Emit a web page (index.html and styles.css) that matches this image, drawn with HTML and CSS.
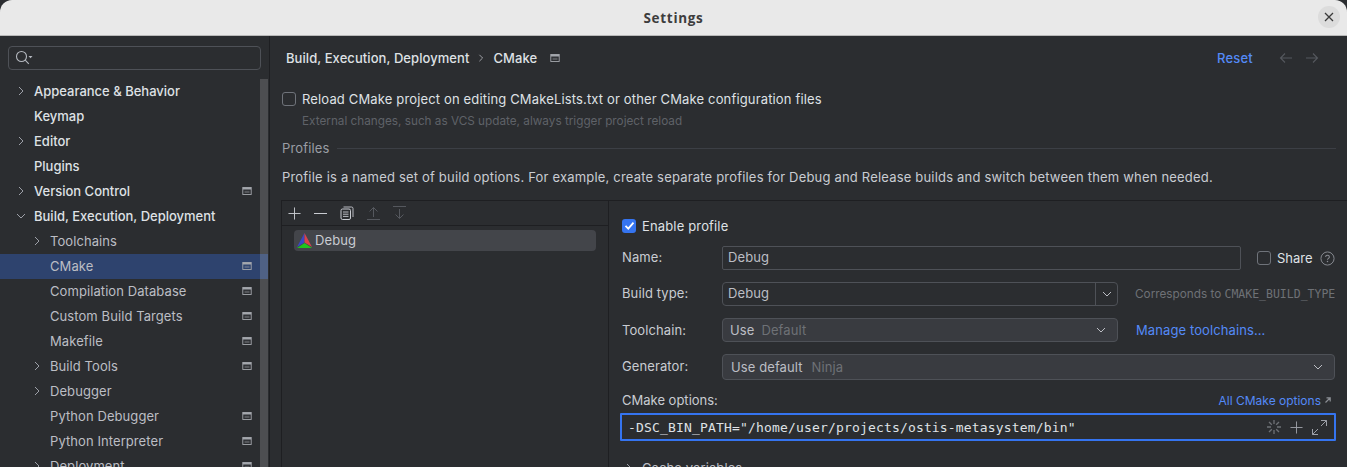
FILE: index.html
```html
<!DOCTYPE html>
<html lang="en">
<head>
  <meta charset="UTF-8" />
  <title>Settings</title>
  <link rel="stylesheet" href="styles.css">
</head>
<body>
  <svg class="defs" width="0" height="0">
    <symbol id="page" viewBox="0 0 10 10"><rect x=".8" y="1.500" width="8.400" height="7" fill="none" stroke="currentColor" stroke-width=".9"/><rect x=".8" y="1.500" width="8.400" height="2" fill="currentColor"/><rect x="2.500" y="4.800" width="5" height="2.200" fill="currentColor" opacity=".35"/></symbol>
    <symbol id="right" viewBox="0 0 10 10"><path d="M3 1l4 4-4 4" fill="none" stroke="currentColor"/></symbol>
    <symbol id="down" viewBox="0 0 10 10"><path d="M1 3l4 4 4-4" fill="none" stroke="currentColor"/></symbol>
    <symbol id="plus" viewBox="0 0 14 14"><path d="M7 .5v13M.5 7h13" fill="none" stroke="currentColor"/></symbol>
  </svg>

  <header class="titlebar">
    <span class="title">Settings</span>
    <button class="close"><svg width="10" height="10" viewBox="0 0 10 10"><path d="M1 1l8 8M9 1l-8 8" stroke="#3a3a3a" stroke-width="1.300"/></svg></button>
  </header>

  <div class="window">
    <aside class="sidebar">
      <div class="search">
        <svg width="18" height="16" viewBox="0 0 18 16"><circle cx="6.500" cy="6.500" r="5" fill="none" stroke="#b4b8bf" stroke-width="1.100"/><path d="M10.200 10.200l3.600 3.600" stroke="#b4b8bf" stroke-width="1.100"/><path d="M13.500 6h4l-2 2.200z" fill="#b4b8bf"/></svg>
      </div>
      <div class="tree-wrap">
        <ul class="tree">
          <li class="row top"><svg class="arrow"><use href="#right"/></svg>Appearance &amp; Behavior</li>
          <li class="row top"><span class="arrow"></span>Keymap</li>
          <li class="row top"><svg class="arrow"><use href="#right"/></svg>Editor</li>
          <li class="row top"><span class="arrow"></span>Plugins</li>
          <li class="row top"><svg class="arrow"><use href="#right"/></svg>Version Control<svg class="mark"><use href="#page"/></svg></li>
          <li class="row top"><svg class="arrow"><use href="#down"/></svg>Build, Execution, Deployment</li>
          <li class="row sub"><svg class="arrow"><use href="#right"/></svg>Toolchains</li>
          <li class="row sub selected"><span class="arrow"></span>CMake<svg class="mark"><use href="#page"/></svg></li>
          <li class="row sub"><span class="arrow"></span>Compilation Database<svg class="mark"><use href="#page"/></svg></li>
          <li class="row sub"><span class="arrow"></span>Custom Build Targets<svg class="mark"><use href="#page"/></svg></li>
          <li class="row sub"><span class="arrow"></span>Makefile<svg class="mark"><use href="#page"/></svg></li>
          <li class="row sub"><svg class="arrow"><use href="#right"/></svg>Build Tools<svg class="mark"><use href="#page"/></svg></li>
          <li class="row sub"><svg class="arrow"><use href="#right"/></svg>Debugger</li>
          <li class="row sub"><span class="arrow"></span>Python Debugger<svg class="mark"><use href="#page"/></svg></li>
          <li class="row sub"><span class="arrow"></span>Python Interpreter<svg class="mark"><use href="#page"/></svg></li>
          <li class="row sub"><svg class="arrow"><use href="#right"/></svg>Deployment<svg class="mark"><use href="#page"/></svg></li>
        </ul>
        <div class="scrollbar"></div>
      </div>
    </aside>

    <main class="content">
      <div class="crumbs">
        <span class="crumb">Build, Execution, Deployment</span>
        <svg class="crumb-sep"><use href="#right"/></svg>
        <span class="crumb">CMake</span>
        <svg class="crumb-mark"><use href="#page"/></svg>
        <a class="reset">Reset</a>
        <svg class="nav" width="14" height="12" viewBox="0 0 14 12"><path d="M13 6H1.500M6 1.500L1.500 6 6 10.500" fill="none" stroke="#55585e" stroke-width="1.100"/></svg>
        <svg class="nav" width="14" height="12" viewBox="0 0 14 12"><path d="M1 6h11.500M8 1.500L12.500 6 8 10.500" fill="none" stroke="#55585e" stroke-width="1.100"/></svg>
      </div>

      <label class="check reload"><span class="box"></span>Reload CMake project on editing CMakeLists.txt or other CMake configuration files</label>
      <p class="hint">External changes, such as VCS update, always trigger project reload</p>

      <div class="section"><span>Profiles</span><i></i></div>
      <p class="desc">Profile is a named set of build options. For example, create separate profiles for Debug and Release builds and switch between them when needed.</p>

      <div class="panel">
        <div class="profiles">
          <div class="toolbar">
            <svg class="tool" width="13" height="13"><use href="#plus"/></svg>
            <svg class="tool" width="13" height="13" viewBox="0 0 13 13"><path d="M0 6.500h13" stroke="currentColor"/></svg>
            <svg class="tool" width="14" height="14" viewBox="0 0 14 14"><rect x="1" y="3" width="9.500" height="10.500" rx="1.500" fill="none" stroke="currentColor"/><path d="M3.500 1h8A1.500 1.500 0 0 1 13 2.500V11M3 6h5.500M3 8.200h5.500M3 10.400h5.500" fill="none" stroke="currentColor" stroke-width=".9"/></svg>
            <svg class="tool off" width="13" height="14" viewBox="0 0 13 14"><path d="M6.500 11V1.500M2.500 5.500l4-4 4 4M0 13.500h13" fill="none" stroke="currentColor"/></svg>
            <svg class="tool off" width="13" height="14" viewBox="0 0 13 14"><path d="M6.500 3v9.500M2.500 8.500l4 4 4-4M0 .5h13" fill="none" stroke="currentColor"/></svg>
          </div>
          <div class="profile">
            <svg width="15" height="15" viewBox="0 0 15 15"><path d="M7.500 0L0 14l7.500-4.500z" fill="#3b46c4"/><path d="M7.500 0L15 14l-7.500-4.500z" fill="#d8424c"/><path d="M0 15h15L7.500 10z" fill="#1fc41f"/></svg>
            Debug
          </div>
        </div>

        <form class="details">
          <label class="check enable"><span class="box on"><svg width="13" height="13" viewBox="0 0 13 13"><path d="M2.500 6.800l2.800 2.800 5.200-6" fill="none" stroke="#fff" stroke-width="1.800"/></svg></span>Enable profile</label>

          <div class="field f-name">
            <label>Name:</label>
            <div class="input name">Debug</div>
            <label class="check share"><span class="box"></span>Share</label>
            <svg class="help" width="15" height="15" viewBox="0 0 16 16"><circle cx="8" cy="8" r="7" fill="none" stroke="#8b8e94"/><path d="M6 6.300C6 5 7 4.500 8 4.500s2 .7 2 1.800c0 1.500-2 1.500-2 3" fill="none" stroke="#8b8e94" stroke-width="1.100"/><circle cx="8" cy="11.300" r=".8" fill="#8b8e94"/></svg>
          </div>

          <div class="field f-type">
            <label>Build type:</label>
            <div class="input combo">Debug<span class="combo-btn"><svg class="chev"><use href="#down"/></svg></span></div>
            <span class="note">Corresponds to <code>CMAKE_BUILD_TYPE</code></span>
          </div>

          <div class="field f-tool">
            <label>Toolchain:</label>
            <div class="select short"><span>Use</span><em>Default</em><svg class="chev"><use href="#down"/></svg></div>
            <a class="link">Manage toolchains...</a>
          </div>

          <div class="field f-gen">
            <label>Generator:</label>
            <div class="select wide"><span>Use default</span><em>Ninja</em><svg class="chev"><use href="#down"/></svg></div>
          </div>

          <div class="options-head">
            <label>CMake options:</label>
            <a class="link small">All CMake options<svg width="6" height="6" viewBox="0 0 6 6"><path d="M.5 5.500L5 1M1.500 .8H5.200V4.500" fill="none" stroke="#8b8e94" stroke-width="1.200"/></svg></a>
          </div>
          <div class="options">
            <code>-DSC_BIN_PATH="/home/user/projects/ostis-metasystem/bin"</code>
            <svg class="spin" width="14" height="14" viewBox="0 0 14 14"><path d="M7 0v4M7 10v4M0 7h4M10 7h4M2 2l2.800 2.800M9.200 9.200L12 12M12 2L9.200 4.800M4.800 9.200L2 12" stroke="#6e7176" stroke-width="1.300"/></svg>
            <svg class="tool-plain" width="13" height="13"><use href="#plus"/></svg>
            <svg class="tool-plain" width="15" height="15" viewBox="0 0 15 15"><path d="M9 .5h5.500V6M14.500 .5L9 6M6 14.500H.5V9M.5 14.500L6 9" fill="none" stroke="currentColor"/></svg>
          </div>
          <div class="cache"><svg class="arrow"><use href="#right"/></svg>Cache variables</div>
        </form>
      </div>
    </main>
  </div>
</body>
</html>
```

FILE: styles.css
```css
* {
  box-sizing: border-box;
}
html, body {
  height: 467px;
  margin: 0;
  overflow: hidden;
}
body {
  font-family: Inter, "Noto Sans", sans-serif;
  font-size: 13px;
  background-color: #2b2d30;
  color: #c9ccd2;
}
.defs {
  display: none;
}
a {
  color: #548af7;
}

.titlebar {
  height: 36px;
  background: #e9e9e9;
  border-bottom: 1px solid #b9b9b9;
  border-radius: 12px 12px 0 0;
  display: flex;
  align-items: center;
  justify-content: center;
  position: relative;
}
.title {
  font-family: "Open Sans", sans-serif;
  font-weight: 700;
  font-size: 13.5px;
  color: #3d3d3d;
  letter-spacing: .7px;
}
.close {
  position: absolute;
  right: 7px;
  top: 6px;
  width: 22px;
  height: 22px;
  padding: 0;
  border: none;
  border-radius: 50%;
  background: #dcdcdc;
  display: flex;
  align-items: center;
  justify-content: center;
}

.window {
  display: flex;
  height: 431px;
}

.sidebar {
  width: 270px;
  flex: none;
  border-right: 1px solid #1e1f22;
  padding-top: 10px;
}
.search {
  height: 24px;
  margin: 0 8px;
  border: 1px solid #4e5157;
  border-radius: 4px;
  display: flex;
  align-items: center;
  padding-left: 6px;
}
.tree-wrap {
  position: relative;
  margin-top: 9px;
}
.tree {
  list-style: none;
  margin: 0;
  padding: 0;
}
.row {
  height: 25px;
  padding-bottom: 2px;
  display: flex;
  align-items: center;
  white-space: nowrap;
}
.row.top {
  padding-left: 16px;
  color: #dfe1e5;
  font-weight: 500;
}
.row.sub {
  padding-left: 32px;
  color: #bcbec4;
  letter-spacing: .08px;
}
.row.selected {
  background: #2e436e;
  margin-right: 1px;
}
.arrow {
  width: 10px;
  height: 10px;
  flex: none;
  margin-right: 8px;
  color: #9da0a8;
}
.mark {
  width: 10px;
  height: 10px;
  margin-left: auto;
  margin-right: 17px;
  color: #a4a7ad;
  flex: none;
}
.row.selected .mark {
  margin-right: 16px;
}
.scrollbar {
  position: absolute;
  top: 0;
  right: 1px;
  bottom: -200px;
  width: 8px;
  background: rgba(255, 255, 255, .16);
}

.content {
  flex: 1;
  min-width: 0;
  padding: 0 11px 0 12px;
}
.crumbs {
  height: 44px;
  display: flex;
  align-items: center;
  padding: 0 0 1px 4px;
}
.crumb {
  color: #dfe1e5;
  font-weight: 500;
  letter-spacing: .07px;
}
.crumb-sep {
  width: 8px;
  height: 8px;
  margin: 0 8px;
  color: #bcbec4;
}
.crumb-mark {
  width: 10px;
  height: 10px;
  margin-left: 13px;
  color: #a4a7ad;
}
.reset {
  margin-left: auto;
  letter-spacing: .2px;
  font-weight: 500;
}
.nav {
  margin-left: 12px;
}
.reset + .nav {
  margin-left: 26px;
}
.nav:last-child {
  margin-right: 17px;
}

.check {
  display: flex;
  align-items: center;
  color: #dfe1e5;
  letter-spacing: .15px;
}
.box {
  width: 14px;
  height: 14px;
  flex: none;
  margin-right: 6px;
  border: 1px solid #6f737a;
  border-radius: 3px;
}
.box.on {
  background: #3574f0;
  border: none;
  display: flex;
  align-items: center;
  justify-content: center;
}
.reload {
  margin-top: 9px;
  height: 20px;
}
.hint {
  margin: 4px 0 0 20px;
  font-size: 11.75px;
  line-height: 16px;
  color: #5f6268;
}
.section {
  display: flex;
  align-items: center;
  margin-top: 10px;
  height: 18px;
  color: #9a9da4;
  letter-spacing: .15px;
}
.section i {
  flex: 1;
  height: 1px;
  margin-left: 7px;
  background: #3c3f45;
}
.desc {
  margin: 11px 0 0;
  line-height: 18px;
  color: #c9ccd2;
  letter-spacing: .19px;
}

.panel {
  display: flex;
  margin-top: 14px;
  height: 300px;
  margin-left: -1px;
  margin-right: -11px;
  border-top: 1px solid #1e1f22;
  border-left: 1px solid #1e1f22;
}
.profiles {
  width: 327px;
  flex: none;
  border-right: 1px solid #1e1f22;
}
.toolbar {
  height: 25px;
  display: flex;
  align-items: center;
  padding-left: 6px;
  gap: 13px;
  border-bottom: 1px solid #1e1f22;
  color: #c9ccd2;
}
.toolbar .off {
  color: #55585e;
}
.profile {
  height: 21px;
  margin: 4px 12px;
  padding: 0 0 1px 3px;
  display: flex;
  align-items: center;
  gap: 3px;
  border-radius: 4px;
  background: #43454a;
  letter-spacing: .1px;
}

.details {
  flex: 1;
  padding: 0 11px;
  min-width: 0;
}
.enable {
  height: 25px;
  margin-top: 12px;
  padding-left: 2px;
}
.field {
  display: flex;
  align-items: center;
  height: 24px;
  margin-top: 12px;
  padding-left: 2px;
  letter-spacing: .1px;
}
.field > label:first-child {
  width: 100px;
  flex: none;
}
.f-name {
  margin-top: 8px;
}
.f-name > label:first-child, .f-type > label:first-child, .f-gen > label:first-child {
  margin-bottom: 2px;
}
.input, .select {
  height: 100%;
  display: flex;
  align-items: center;
  border: 1px solid #4e5157;
  border-radius: 2px;
  padding-left: 5px;
  color: #bcbec4;
  flex: none;
}
.input {
  padding-bottom: 2px;
}
.input.name {
  width: 519px;
}
.share {
  margin-left: 16px;
  letter-spacing: 0;
}
.help {
  margin-left: 7px;
  flex: none;
}
.input.combo {
  width: 396px;
  border-radius: 4px;
}
.combo-btn {
  margin-left: auto;
  width: 22px;
  height: calc(100% + 2px);
  margin-bottom: -2px;
  border-left: 1px solid #4e5157;
  display: flex;
  align-items: center;
  justify-content: center;
}
.chev {
  width: 10px;
  height: 10px;
  color: #bcbec4;
  flex: none;
}
.note {
  margin-left: 17px;
  font-size: 11.75px;
  color: #6e7176;
  white-space: nowrap;
  letter-spacing: 0;
}
.note code, .options code {
  font-family: "DejaVu Sans Mono", "Liberation Mono", monospace;
}
.note code {
  font-size: 11.5px;
}
.select {
  background: #393b40;
  border-radius: 4px;
  padding: 0 11px 0 7px;
}
.select em {
  font-style: normal;
  color: #6e7176;
  margin-left: 7px;
}
.select .chev {
  margin-left: auto;
}
.select.short {
  width: 396px;
}
.link {
  margin-left: 18px;
  white-space: nowrap;
}
.f-gen {
  height: 26px;
}
.select.wide {
  width: 613px;
  padding-left: 8px;
}
.select.wide em {
  margin-left: 9px;
}
.options-head {
  display: flex;
  align-items: center;
  justify-content: space-between;
  height: 18px;
  margin-top: 11px;
  padding: 0 2px;
  margin-right: 3px;
}
.link.small {
  font-size: 12px;
  display: flex;
  align-items: center;
  gap: 4px;
}
.options {
  height: 28px;
  margin-top: 4px;
  border: 2px solid #3574f0;
  border-radius: 1px;
  display: flex;
  align-items: center;
  padding: 0 7px 0 6px;
  color: #dfe1e5;
  width: 716px;
}
.options code {
  font-size: 13px;
  letter-spacing: .17px;
  margin-right: auto;
}
.spin {
  margin-right: 9px;
}
.tool-plain {
  color: #9da0a8;
  margin-right: 9px;
}
.tool-plain:last-child {
  margin-right: 0;
}
.cache {
  display: flex;
  align-items: center;
  margin-top: 19px;
  color: #bcbec4;
  padding-left: 4px;
  letter-spacing: .1px;
}
```
